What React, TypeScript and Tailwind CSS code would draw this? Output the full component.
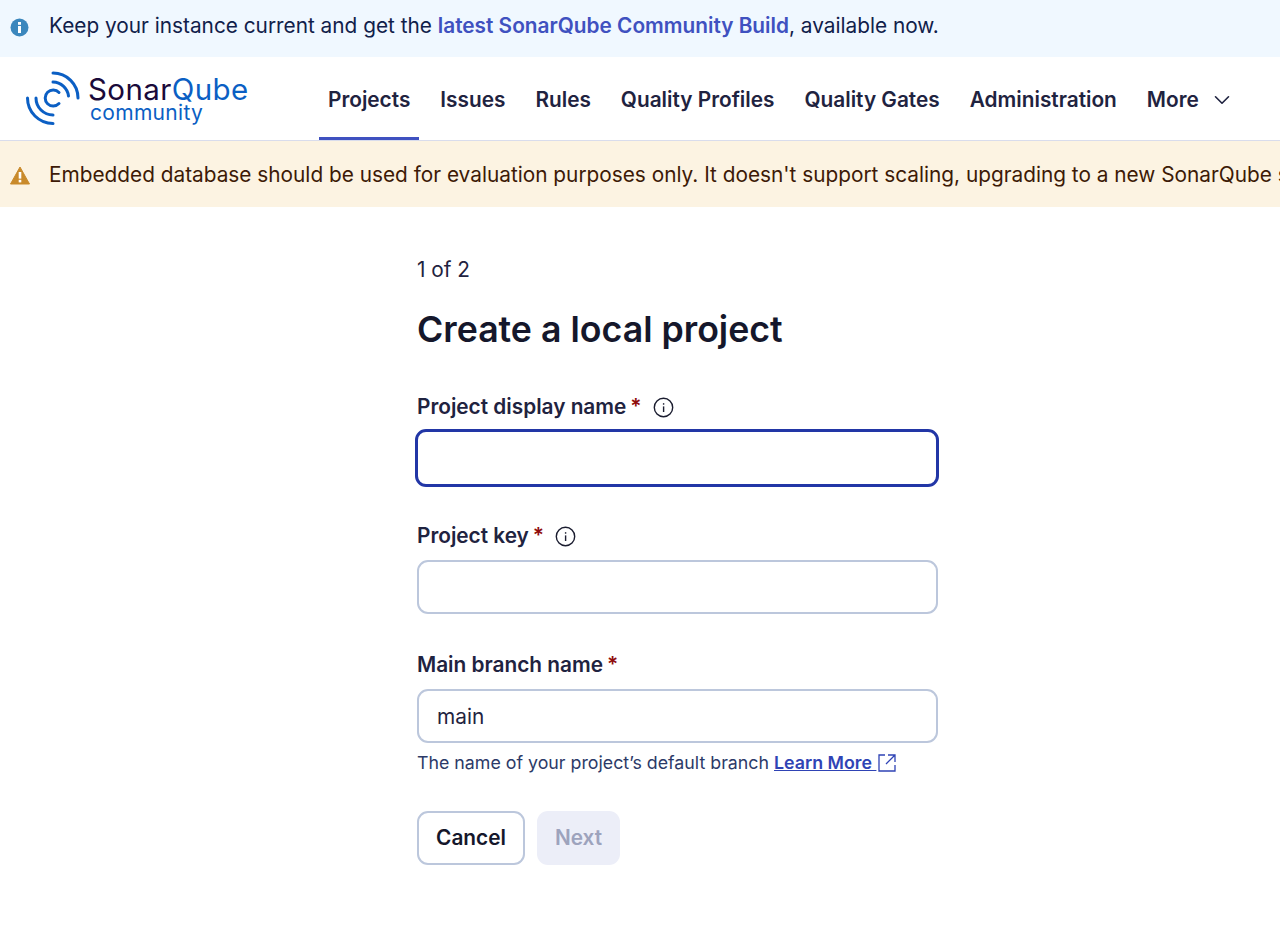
import React from "react";
import { ChevronDown } from "lucide-react";

function Info() {
  return (
    <svg width="21" height="21" viewBox="0 0 21 21" fill="none" className="shrink-0">
      <circle cx="10.5" cy="10.5" r="9.2" stroke="#1b1d30" strokeWidth="1.4" />
      <rect x="9.9" y="9.4" width="1.4" height="5.6" fill="#1b1d30" />
      <rect x="9.9" y="6.2" width="1.4" height="1.5" fill="#1b1d30" />
    </svg>
  );
}

function Logo() {
  return (
    <div className="flex items-center">
      <svg width="56" height="56" viewBox="0 0 56 56" fill="none" className="shrink-0">
        <g stroke="#0b5fc4" strokeWidth="3" strokeLinecap="round">
          <path d="M33 21.5 A8 8 0 1 0 33 32.5" />
          <path d="M27 2 A25 25 0 0 1 52 27" />
          <path d="M27 11 A16 16 0 0 1 42.5 25" />
          <path d="M1.5 27 A25.5 25.5 0 0 0 27 52.5" />
          <path d="M10 27 A17 17 0 0 0 27 44" />
        </g>
      </svg>
      <div className="ml-[6px] flex flex-col font-['Inter',sans-serif]">
        <div className="text-[29.5px] leading-[32px] text-[#1a0a3a] tracking-[0.4px]">
          Sonar<span className="text-[#0b5fc4]">Qube</span>
        </div>
        <div className="-mt-[4px] pl-[2px] text-[21px] leading-[24px] text-[#0b5fc4] tracking-[0.3px]">community</div>
      </div>
    </div>
  );
}

function Label({ text, info }: { text: string; info?: boolean }) {
  return (
    <div className="flex h-[26px] items-center">
      <span className="text-[20.8px] font-semibold text-[#1f2340]">{text}</span>
      <span className="ml-[4px] text-[20.8px] font-semibold text-[#8f0b0b]">*</span>
      {info && (
        <span className="ml-[11px] flex">
          <Info />
        </span>
      )}
    </div>
  );
}

const nav = ["Projects", "Issues", "Rules", "Quality Profiles", "Quality Gates", "Administration"];

export default function App() {
  return (
    <div className="min-h-[927px] w-[1280px] overflow-hidden bg-white font-['Inter',sans-serif]">
      <div className="flex h-[57px] items-center bg-[#f0f8ff] pb-[5px] pl-[10px] text-[20.8px] text-[#10204a]">
        <svg width="19" height="19" viewBox="0 0 19 19" className="mt-[3px] shrink-0">
          <circle cx="9.5" cy="9.5" r="9" fill="#3b87bd" />
          <rect x="8" y="8" width="3" height="7" fill="#fff" />
          <rect x="8" y="4" width="3" height="2.8" fill="#fff" />
        </svg>
        <span className="ml-[20px] whitespace-nowrap">
          Keep your instance current and get the{" "}
          <span className="font-semibold text-[#3f51c0]">latest SonarQube Community Build</span>, available now.
        </span>
      </div>

      <div className="flex h-[84px] border-b border-[#d9dcec] pl-[26px]">
        <div className="flex w-[293px] shrink-0 items-center">
          <Logo />
        </div>
        <nav className="flex">
          {nav.map((n, i) => (
            <div
              key={n}
              className={`mr-[12px] flex items-center whitespace-nowrap border-b-[3px] px-[9px] pt-[5px] text-[20.8px] font-semibold text-[#1f2340] ${
                i === 0 ? "border-[#3f51c0]" : "border-transparent"
              }`}
            >
              {n}
            </div>
          ))}
          <div className="flex items-center whitespace-nowrap border-b-[3px] border-transparent px-[9px] pt-[5px] text-[20.8px] font-semibold text-[#1f2340]">
            More
            <ChevronDown className="ml-[10px]" size={26} strokeWidth={1.5} />
          </div>
        </nav>
      </div>

      <div className="flex h-[66px] items-center overflow-hidden bg-[#fcf3e2] pl-[10px] pt-[2px] text-[20.8px] text-[#3d1a06]">
        <svg width="20" height="19" viewBox="0 0 20 19" className="shrink-0">
          <path d="M10 1 L19.5 18 H0.5 Z" fill="#c98a2b" stroke="#c98a2b" strokeWidth="1" strokeLinejoin="round" />
          <rect x="8.7" y="6" width="2.6" height="6.6" fill="#fff" />
          <rect x="8.7" y="13.8" width="2.6" height="2.6" fill="#fff" />
        </svg>
        <span className="ml-[19px] whitespace-nowrap">
          Embedded database should be used for evaluation purposes only. It doesn't support scaling, upgrading to a new SonarQube server, or migrating your data out.
        </span>
      </div>

      <main className="ml-[417px] w-[520px] pt-[50px]">
        <div className="h-[25px] text-[20.8px] leading-[25px] text-[#1f2340]">1 of 2</div>
        <h1 className="mt-[25px] text-[35.7px] leading-[44px] font-semibold text-[#15172b]">Create a local project</h1>

        <div className="mt-[43px]">
          <Label text="Project display name" info />
          <input className="-ml-[2px] mt-[9px] block h-[58px] w-[524px] rounded-[11px] border-[3px] border-[#2236a6] bg-white outline-none" />
        </div>
        <div className="mt-[36px]">
          <Label text="Project key" info />
          <input className="mt-[11px] block h-[54px] w-[521px] rounded-[11px] border-2 border-[#bcc7dc] bg-white outline-none" />
        </div>
        <div className="mt-[38px]">
          <Label text="Main branch name" />
          <input
            defaultValue="main"
            className="mt-[11px] block h-[54px] w-[521px] rounded-[11px] border-2 border-[#bcc7dc] bg-white px-[18px] text-[20.8px] text-[#1f2340] outline-none"
          />
        </div>
        <div className="mt-[8px] flex h-[24px] items-center whitespace-nowrap text-[17.8px] text-[#2c3a68]">
          The name of your project’s default branch
          <a className="ml-[5px] flex items-center font-semibold text-[#2f43b5] underline">
            Learn More&nbsp;
            <svg width="20" height="20" viewBox="0 0 20 20" fill="none" stroke="#2f43b5" strokeWidth="1.3" className="ml-[1px]">
              <path d="M8 2 H2 V18 H18 V12" />
              <path d="M11 2 H18 V9 M18 2 L9 11" />
            </svg>
          </a>
        </div>
        <div className="mt-[36px] flex gap-[12px]">
          <button className="h-[54px] w-[108px] rounded-[11px] border-2 border-[#bcc7dc] bg-white text-[20.8px] font-semibold text-[#15172b]">
            Cancel
          </button>
          <button className="h-[54px] w-[83px] rounded-[11px] bg-[#eceef8] text-[20.8px] font-semibold text-[#9da3bd]">
            Next
          </button>
        </div>
      </main>
    </div>
  );
}
